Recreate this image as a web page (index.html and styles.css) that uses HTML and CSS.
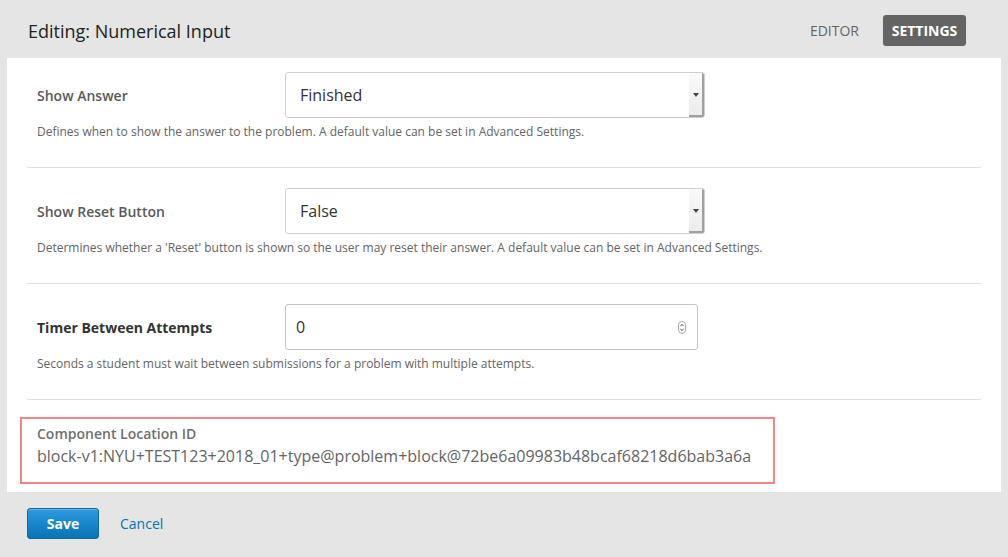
FILE: index.html
```html
<!DOCTYPE html>
<html>
<head>
<meta charset="utf-8">
<link rel="stylesheet" href="styles.css">
</head>
<body>
<div class="modal">
  <div class="header">
    <h1 class="title">Editing: Numerical Input</h1>
    <div class="modes">
      <span class="mode">Editor</span>
      <span class="mode active">Settings</span>
    </div>
  </div>
  <div class="panel">
    <ul class="fields">
      <li class="field">
        <div class="row">
          <label class="label">Show Answer</label>
          <div class="select"><span class="value">Finished</span><span class="arrow"><svg width="6" height="4" viewBox="0 0 6 4"><path d="M0 0H6L3 4Z" fill="#444"/></svg></span></div>
        </div>
        <p class="help">Defines when to show the answer to the problem. A default value can be set in Advanced Settings.</p>
      </li>
      <li class="field">
        <div class="row">
          <label class="label">Show Reset Button</label>
          <div class="select"><span class="value">False</span><span class="arrow"><svg width="6" height="4" viewBox="0 0 6 4"><path d="M0 0H6L3 4Z" fill="#444"/></svg></span></div>
        </div>
        <p class="help">Determines whether a 'Reset' button is shown so the user may reset their answer. A default value can be set in Advanced Settings.</p>
      </li>
      <li class="field">
        <div class="row">
          <label class="label strong">Timer Between Attempts</label>
          <div class="number"><span class="value">0</span><span class="spin"><svg width="8" height="13" viewBox="0 0 8 13"><rect x="0.5" y="0.5" width="7" height="12" rx="3.5" fill="#fff" stroke="#aaa"/><path d="M2.3 5.2L4 3.4L5.7 5.2M2.3 7.8L4 9.6L5.7 7.8" fill="none" stroke="#555" stroke-width="1"/></svg></span></div>
        </div>
        <p class="help">Seconds a student must wait between submissions for a problem with multiple attempts.</p>
      </li>
    </ul>
    <div class="location">
      <div class="loc-label">Component Location ID</div>
      <div class="loc-id">block-v1:NYU+TEST123+2018_01+type@problem+block@72be6a09983b48bcaf68218d6bab3a6a</div>
    </div>
  </div>
  <div class="footer">
    <button class="save">Save</button>
    <a class="cancel">Cancel</a>
  </div>
</div>
</body>
</html>
```
FILE: styles.css
```css
* { box-sizing: border-box; }
html, body { margin: 0; padding: 0; }
body {
  background: #e5e5e5;
  font-family: "Open Sans", "Liberation Sans", sans-serif;
  width: 1008px;
  height: 557px;
  overflow: hidden;
}
.modal { width: 1008px; height: 557px; }
.header {
  height: 58px;
  display: flex;
  align-items: center;
  justify-content: space-between;
  padding: 0 42px 0 28px;
}
.title {
  margin: 0;
  font-size: 18px;
  font-weight: 400;
  color: #222;
  position: relative;
  top: 2px;
}
.modes { display: flex; align-items: center; gap: 14px; }
.mode {
  font-size: 14px;
  text-transform: uppercase;
  color: #646464;
  padding: 5px 10px;
  line-height: 21px;
  position: relative;
  top: 1px;
}
.mode.active {
  top: 1px;
  height: 31px;
  line-height: 31px;
  background: #646464;
  color: #fff;
  font-weight: 700;
  border-radius: 3px;
  outline: 1px dotted #ddd;
  width: 83px;
  text-align: center;
  padding: 0;
}
.panel {
  margin: 0 7px;
  height: 434px;
  background: #fff;
  padding-top: 1px;
}
.fields { list-style: none; margin: 0 20px; padding: 0; }
.field {
  padding: 20px 0 26px 10px;
  border-bottom: 1px solid #e0e0e0;
}
.field:first-child { padding-top: 13px; }
.row { display: flex; align-items: center; }
.label {
  width: 248px;
  font-size: 14px;
  font-weight: 600;
  color: #5a5a5a;
}
.label.strong { color: #333; font-weight: 700; }
.select {
  width: 420px;
  height: 46px;
  border: 1px solid #cfcfcf;
  border-radius: 3px;
  display: flex;
  align-items: center;
  justify-content: space-between;
  overflow: hidden;
}
.value { padding-left: 14px; font-size: 16px; color: #333; }
.arrow {
  width: 15px;
  height: 100%;
  background: linear-gradient(#fafafa, #ececec);
  border-right: 2px solid #a0a0a0;
  border-bottom: 2px solid #a0a0a0;
  display: flex;
  align-items: center;
  justify-content: center;
  padding-top: 1px;
}
.number {
  width: 413px;
  height: 46px;
  border: 1px solid #c4c4c4;
  border-radius: 3px;
  display: flex;
  align-items: center;
  justify-content: space-between;
}
.number .value { padding-left: 10px; }
.spin { display: flex; margin-right: 11px; }
.help {
  margin: 5px 0 0;
  font-size: 12px;
  line-height: 18px;
  color: #646464;
}
.location {
  margin: 17px 0 0 13px;
  width: 755px;
  border: 2px solid #ef8585;
  padding: 5px 15px 14px;
}
.loc-label { font-size: 14px; font-weight: 600; line-height: 20px; color: #707070; }
.loc-id { font-size: 16px; line-height: 24px; color: #646464; }
.footer {
  display: flex;
  align-items: center;
  padding: 16px 0 0 27px;
  gap: 21px;
}
.save {
  width: 72px;
  height: 31px;
  border: 1px solid #0a6aa1;
  border-radius: 3px;
  background: linear-gradient(#2d9ae0, #0873b5);
  color: #fff;
  font-family: "Open Sans", sans-serif;
  font-size: 14px;
  font-weight: 700;
  box-shadow: inset 0 1px 0 rgba(255,255,255,0.25);
}
.cancel { font-size: 14px; color: #0075b4; }
```
